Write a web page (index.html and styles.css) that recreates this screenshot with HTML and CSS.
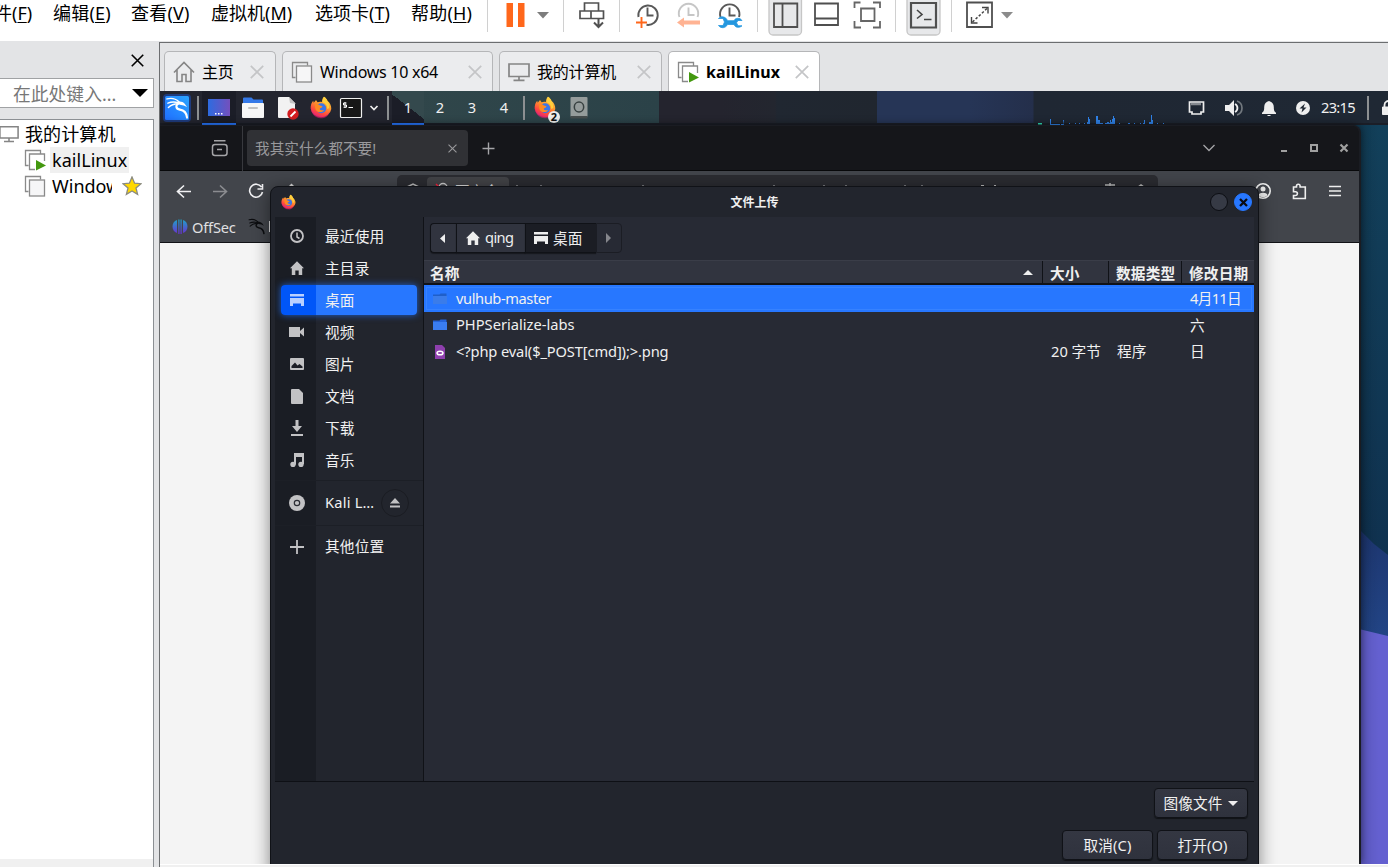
FILE: index.html
```html
<!DOCTYPE html>
<html lang="zh-CN">
<head>
<meta charset="utf-8">
<title>kailLinux</title>
<link rel="stylesheet" href="styles.css">
</head>
<body>
<svg class="defs" width="0" height="0" aria-hidden="true">
  <defs>
    <linearGradient id="fxg" x1="0.8" y1="0" x2="0.3" y2="1"><stop offset="0" stop-color="#ffe04a"/><stop offset=".4" stop-color="#ff9a2e"/><stop offset=".75" stop-color="#ff4a3d"/><stop offset="1" stop-color="#e0217c"/></linearGradient>
    <linearGradient id="kg" x1="0" y1="1" x2="1" y2="0"><stop offset="0" stop-color="#2070ff"/><stop offset="1" stop-color="#2aa4ff"/></linearGradient>
    <linearGradient id="dg" x1="0" y1="0" x2="1" y2="0"><stop offset="0" stop-color="#2d6be0"/><stop offset="1" stop-color="#7450bd"/></linearGradient>
    <linearGradient id="og" x1="0" y1="0" x2="0" y2="1"><stop offset="0" stop-color="#1ea2c8"/><stop offset="1" stop-color="#6a2fd0"/></linearGradient>
    <symbol id="fx" viewBox="0 0 22 22">
      <path d="M14 .3c2 1 3 2.600 3.600 4.300C19.600 6 21.500 9 21.300 12.500A10.400 9.700 0 0 1 .7 12.300C.4 8.500 1.600 6 3.200 4.300l.5 2L6 3.500l1.600 2.300C9 5 11 5 12 5.500 12 3.500 12.600 1.500 14 .3z" fill="url(#fxg)"/>
      <path d="M1 9c0 7 4.500 11 10 11 4 0 7-2 8.600-5-1.500 6-6 7.200-9 6.800C5 21.500 0 17 1 9z" fill="#e8206f" opacity=".55"/>
      <circle cx="11.200" cy="11.800" r="5" fill="#3b76e8"/>
      <path d="M5 7.500c2-.4 4 .2 5 1.600l2.500.6c-.2 1.500-2.300 1.500-2.800 2.500.3 1.600 2.600 2 4.400 1.200-1.500 3-7.300 3.100-8.600-.6C5 11 5 9 5 7.500z" fill="#ff8a22"/>
      <path d="M13 6c2.700.8 4.500 3 4.200 6.500l2-1C19.500 8 18 4 14 .3 12.800 2 12.400 4.500 13 6z" fill="#ffcf3c"/>
    </symbol>
    <symbol id="dragon" viewBox="0 0 24 24">
      <path d="M1.500 2.500c4-1 9-.5 12.500 3M2.500 7c3.500-1.500 7-1.500 11-.5M3 11.500C6 8.500 9 7.500 13 7.500" fill="none" stroke="currentColor" stroke-width="1.500" stroke-linecap="round"/>
      <path d="M13.500 7.500c-3.500 2-2.500 5.500 1.500 6.200 4.500.8 7 3.300 7.500 8.300" fill="none" stroke="currentColor" stroke-width="2.200" stroke-linecap="round"/>
      <path d="M12.500 5.500c3-.8 6 .2 7.500 2l2.500 3.500-3.500-1.700-4-.8-2-1z" fill="currentColor"/>
    </symbol>
    <symbol id="stack" viewBox="0 0 22 22">
      <path d="M4.500 16.500h-3v-15h15v3" fill="none" stroke="#8a8a8a" stroke-width="1.300"/><rect x="5.500" y="5" width="15" height="16" fill="#f6f6f7" stroke="#8a8a8a" stroke-width="1.300"/>
    </symbol>
    <symbol id="stackrun" viewBox="0 0 22 22">
      <path d="M4.500 16.500h-3v-15h15v3M11 20.500H5.500V5h15v7" fill="none" stroke="#8a8a8a" stroke-width="1.300"/><path d="M12 11l10 5.500-10 5z" fill="#43980f"/>
    </symbol>
    <symbol id="monitor" viewBox="0 0 22 20">
      <path d="M1 2h20v12.500H1zM11 15v3M5.500 18.300h11" fill="none" stroke="#858585" stroke-width="1.700"/>
    </symbol>
    <symbol id="home" viewBox="0 0 14 14"><path d="M7 .3L14 7.300h-1.800V14H8.700V9.500H5.300V14H1.800V7.300H0z" fill="currentColor"/></symbol>
    <symbol id="desk" viewBox="0 0 14 12"><path d="M0 0h14v2.500H0zM0 4h14v8h-3V9.500H3V12H0z" fill="currentColor"/></symbol>
    <symbol id="folder" viewBox="0 0 14 12"><path d="M0 1.500h6.500l1-1h6V11H0z" fill="#2462d8"/><path d="M0 3h14v8H0z" fill="#3a7df0"/></symbol>
    <symbol id="folderdim" viewBox="0 0 14 12"><path d="M0 1.500h6.500l1-1h6V11H0z" fill="#1f5fc9"/><path d="M0 3h14v8H0z" fill="#3a7cea"/></symbol>
    <symbol id="cross" viewBox="0 0 14 14"><path d="M.8.8l12.400 12.400M13.200.8L.8 13.200" fill="none" stroke="currentColor" stroke-width="1.700"/></symbol>
  </defs>
</svg>

<header class="menubar">
  <nav class="menus">
    <span class="m-file">件(<u>F</u>)</span><span class="m-edit">编辑(<u>E</u>)</span><span class="m-view">查看(<u>V</u>)</span><span class="m-vm">虚拟机(<u>M</u>)</span><span class="m-tabs">选项卡(<u>T</u>)</span><span class="m-help">帮助(<u>H</u>)</span>
  </nav>
  <i class="vsep"></i>
  <svg width="75" height="41" viewBox="488 0 75 41"><path d="M506.500 3h6.500v24h-6.500zM518 3h6.500v24H518z" fill="#ff671b"/><path d="M537 12h12l-6 6.500z" fill="#7d7d7d"/></svg>
  <i class="vsep"></i>
  <svg width="55" height="41" viewBox="564 0 55 41"><g fill="none" stroke="#515151" stroke-width="1.700"><path d="M584.500 11V3h14v8M580 11h11v7.500h-11zM591 11h12.500v7.500H591z"/><path d="M598.500 18v9M594 22.500l4.500 4.500 4.500-4.500" stroke-width="2"/></g></svg>
  <i class="vsep"></i>
  <svg width="137" height="41" viewBox="620 0 137 41"><g fill="none" stroke-width="1.900">
    <path d="M638.500 17a9.700 9.700 0 1 1 8 7.800M647.500 7.500v8h6" stroke="#585858"/><path d="M636 22.500h11M641.500 17v11" stroke="#ff671b"/>
    <path d="M679.500 17a9.700 9.700 0 1 1 18 0M688.500 7.500v7.500h6" stroke="#c6c6c6"/><path d="M720.500 17a9.700 9.700 0 1 1 18.500 0M729.500 7.500v8h6" stroke="#585858"/></g>
    <path d="M677 22.500l7-5v3h16v4h-16v3z" fill="#ffb393"/>
    <path d="M718.500 18.500h4.500l1.500 3.500-1.500 3.500h-4.500c2.500 3.500 7.500 2.500 9-1h6.500c1.500 3.500 5.500 3.500 8 1.300h-4l-1.500-3 1.500-2.300h4c-2-3-6.500-3-8 .2h-6.500c-1.500-4.200-6.500-5-9-2.200z" fill="#2497df" stroke="#2497df" stroke-width=".8"/></svg>
  <i class="vsep"></i>
  <svg width="137" height="41" viewBox="758 0 137 41"><path d="M769-4h32.500v35a4 4 0 0 1-4 4h-24.500a4 4 0 0 1-4-4z" fill="#e7e8ea" stroke="#c6c6c6" stroke-width="1.300"/><g fill="none" stroke="#4f4f4f" stroke-width="1.800"><path d="M774 3.500h23.300v23.500H774zM782.500 4v23M815 3.500h23v21.500h-23zM815 18.500h23"/><path d="M854.500 8V2.500h6M873 2.500h7V8M880 21v6.500h-7M861 27.500h-6.500V21M861 8.500h13.500V21H861z" stroke="#666"/></g></svg>
  <i class="vsep"></i>
  <svg width="55" height="41" viewBox="896 0 55 41"><path d="M907-4h33v35a4 4 0 0 1-4 4h-25a4 4 0 0 1-4-4z" fill="#e7e8ea" stroke="#c6c6c6" stroke-width="1.300"/><path d="M911 3h25v24.500h-25z" fill="none" stroke="#4f4f4f" stroke-width="2.200"/><path d="M917 10l5 4.500-5 4M924 19.500h7.500" fill="none" stroke="#444" stroke-width="1.600"/></svg>
  <i class="vsep"></i>
  <svg width="75" height="41" viewBox="952 0 75 41"><path d="M967 2.500h25v24.500h-25z" fill="none" stroke="#4f4f4f" stroke-width="1.800"/><path d="M982 7.500h6v6M971.500 17v6h6" fill="none" stroke="#444" stroke-width="1.400"/><path d="M972.500 22l15-14" stroke="#444" stroke-width="1.500" stroke-dasharray="2.500 1.800"/><path d="M1001 12h12l-6 6.500z" fill="#8b8b8b"/></svg>
</header>

<div class="main">
  <aside class="library">
    <div class="lib-head"><svg width="13" height="13"><use href="#cross"/></svg></div>
    <div class="lib-search"><span>在此处键入...</span><svg width="16" height="8" viewBox="0 0 16 8"><path d="M0 0h16L8 8z"/></svg></div>
    <div class="tree">
      <div class="node root"><svg width="20" height="20"><use href="#monitor"/></svg><span>我的计算机</span></div>
      <div class="node"><svg width="22" height="22"><use href="#stackrun"/></svg><span class="picked">kailLinux</span></div>
      <div class="node"><svg width="22" height="22"><use href="#stack"/></svg><span class="cut">Window</span><svg class="star" width="20" height="20" viewBox="0 0 20 20"><path d="M10 1l2.600 6.200 6.400.5-5 4.200 1.600 6.500L10 15l-5.600 3.400L6 11.900 1 7.700l6.400-.5z" fill="#ffd800" stroke="#8b8b80" stroke-width="1.300"/></svg></div>
      <div class="tree-foot"></div>
    </div>
  </aside>

  <section class="workspace">
    <div class="tabs">
      <div class="tab t1"><svg width="22" height="22" viewBox="0 0 22 22"><path d="M1 11.500L11 1.500l10 10M4 9v11.500h5v-7h4v7h5V9" fill="none" stroke="#858585" stroke-width="1.600"/></svg><span>主页</span><svg class="x" width="14" height="14"><use href="#cross"/></svg></div>
      <div class="tab t2"><svg width="22" height="22"><use href="#stack"/></svg><span>Windows 10 x64</span><svg class="x" width="14" height="14"><use href="#cross"/></svg></div>
      <div class="tab t3"><svg width="22" height="20"><use href="#monitor"/></svg><span>我的计算机</span><svg class="x" width="14" height="14"><use href="#cross"/></svg></div>
      <div class="tab t4"><svg width="22" height="22"><use href="#stackrun"/></svg><span>kailLinux</span><svg class="x" width="14" height="14"><use href="#cross"/></svg></div>
    </div>

    <div class="guest">
      <svg class="wallpaper" width="27" height="739" viewBox="1361 125 27 739" preserveAspectRatio="none">
        <defs><linearGradient id="w1" x1="0" y1="0" x2="0" y2="1"><stop offset="0" stop-color="#12405a"/><stop offset="1" stop-color="#0f314f"/></linearGradient><linearGradient id="w2" x1="0" y1="0" x2="0" y2="1"><stop offset="0" stop-color="#1d3670"/><stop offset="1" stop-color="#224586"/></linearGradient><linearGradient id="w3" x1="0" y1="0" x2="1" y2="0"><stop offset="0" stop-color="#000" stop-opacity=".1"/><stop offset="1" stop-color="#000" stop-opacity="0"/></linearGradient></defs>
        <path d="M1361 125h27v440h-27z" fill="url(#w1)"/><path d="M1361 531l13 13 14 11v85h-27z" fill="url(#w2)"/><path d="M1361 629.500l27 6.500v228h-27z" fill="#6460d0"/><path d="M1361 125h18v739h-18z" fill="url(#w3)"/>
      </svg>

      <div class="panel">
        <svg width="36" height="34" viewBox="160 91 36 34"><rect x="163" y="94" width="28" height="28" rx="4" fill="#1d50c0" opacity=".55"/><rect x="165" y="96" width="24" height="24" rx="1.500" fill="url(#kg)"/><svg x="165.500" y="96" width="23" height="24" color="#fff"><use href="#dragon"/></svg></svg>
        <i class="psep"></i>
        <svg class="on" width="34" height="34" viewBox="202 91 34 34"><path d="M208 99h22v17h-22z" fill="url(#dg)"/><path d="M215 113h1.500v1.500H215zM218 113h1.500v1.500H218zM221 113h1.500v1.500H221z" fill="#fff"/></svg>
        <svg width="34" height="34" viewBox="236 91 34 34"><path d="M243 98.500a1 1 0 0 1 1-1h7.500l2 2H262a1 1 0 0 1 1 1v4h-20z" fill="#3579e8"/><rect x="242" y="103" width="22" height="15" rx="1" fill="#f7f7f7"/><rect x="248" y="107" width="10" height="2" rx="1" fill="#c2c2c2"/></svg>
        <svg width="34" height="34" viewBox="270 91 34 34"><path d="M278 98a1 1 0 0 1 1-1h10l6 6v15h-16a1 1 0 0 1-1-1z" fill="#f2f2f2"/><path d="M289 97l7 7-6-1z" fill="#c4c4c4"/><circle cx="293" cy="114" r="5.700" fill="#d31d20"/><path d="M290.500 116.500l5-5" stroke="#fff" stroke-width="1.800"/></svg>
        <svg width="34" height="34" viewBox="304 91 34 34"><svg x="310" y="96" width="22" height="23"><use href="#fx"/></svg></svg>
        <svg width="48" height="34" viewBox="338 91 48 34"><rect x="340.500" y="98.500" width="21" height="19" rx="1" fill="#171717" stroke="#f0f0f0" stroke-width="1.200"/><path d="M346.500 103h-3v2h3v2.200h-3M345 102v6M348.500 107.500h4.500" fill="none" stroke="#fff" stroke-width="1"/><path d="M370.500 106l3.500 3.500 3.500-3.500" fill="none" stroke="#eee" stroke-width="1.700"/></svg>
        <i class="psep"></i>
        <span class="ws on">1</span><span class="ws">2</span><span class="ws">3</span><span class="ws">4</span>
        <i class="psep p3"></i>
        <svg width="72" height="34" viewBox="528 91 72 34"><svg x="534" y="96" width="22" height="23"><use href="#fx"/></svg><circle cx="554" cy="117" r="6" fill="#eeeeec"/><text x="554" y="121" class="badge">2</text><rect x="570.500" y="97" width="17" height="20" rx="1" fill="#959c9b"/><path d="M570.500 116h17v2.500h-17z" fill="#454c4c"/><ellipse cx="579" cy="107" rx="4.700" ry="5" fill="none" stroke="#384141" stroke-width="1.500"/></svg>
        <svg class="graph" width="130" height="34" viewBox="1036 91 130 34"><path d="M1038 123h4v1.500h-4z" fill="#2fe0b8"/><path d="M1050 119h1v5h9v1h-10zM1063 120h1v4h-3v1h3zM1069 123h1v1h-1zM1075 123h1v1h-1zM1079 123h1v1h-1zM1084 123h1v1h-1zM1087 124v-2h1v-5h1v2h1v5zM1096 124v-8h2v4h2v3h3v1zM1105 124v-1h2v-1h2v1h1v-3h1v2h1v-3h1v-3h1v2h1v6zM1119 123h1v1h-1zM1128 123h2v1h-2zM1134 123h1v1h-1zM1140 123h1v1h-1zM1143 123h1v-3h1v4h-2zM1149 124v-2h2v-7h1v5h1v4zM1157 123h1v1h-1zM1163 123h1v1h-1z" fill="#2f83ea"/></svg>
        <svg width="155" height="34" viewBox="1166 91 155 34"><path d="M1189.500 102h14v10h-2.500v2h-9v-2h-2.500z" fill="none" stroke="#eee" stroke-width="1.700"/><path d="M1191.500 104h10" stroke="#eee" stroke-width="2.500" stroke-dasharray="1 1"/><path d="M1225 105h4l5-5v16l-5-5h-4z" fill="#eee"/><path d="M1235 104a4.500 4.500 0 0 1 0 8" fill="none" stroke="#eee" stroke-width="1.800"/><path d="M1237 101a7.400 7.400 0 0 1 0 14" fill="none" stroke="#72787e" stroke-width="1.700"/><path d="M1262 114v-1.200c2-1 2.200-3 2.200-5.800 0-3.500 2-5 4.800-6 2.800 1 4.800 2.500 4.800 6 0 2.800.2 4.800 2.200 5.800v1.200zM1267.500 115h3v1h-3z" fill="#eee"/><circle cx="1303" cy="108" r="7" fill="#eee"/><path d="M1305 103.500l-5.500 5h3l-1 4 5-5h-3z" fill="#202832"/></svg>
        <span class="clock">23:15</span>
        <svg width="26" height="34" viewBox="1362 91 26 34"><path d="M1367 96h2v24h-2z" fill="#8d9092"/><path d="M1382.500 107h8v7.500h-8z" fill="#eee" stroke="#eee"/><path d="M1384.500 107v-2a4 4 0 0 1 6-3.500" fill="none" stroke="#eee" stroke-width="1.800"/></svg>
      </div>

      <div class="browser">
        <div class="bstrip">
          <svg width="82" height="45" viewBox="161 127 82 45"><g fill="none" stroke="#a5a5a8" stroke-width="1.500"><rect x="213" y="145.500" width="14.500" height="11" rx="2.500"/><path d="M214.500 141.700h11.500M217.500 150.500h5"/></g></svg>
          <div class="btab"><span>我其实什么都不要!</span><svg width="9" height="9"><use href="#cross"/></svg></div>
          <svg width="40" height="45" viewBox="469 126 40 45"><path d="M483.500 148.500h12M489.500 142.500v12" stroke="#a5a5a8" stroke-width="1.400"/></svg>
          <svg class="winbtns" width="160" height="45" viewBox="1199 126 160 45"><path d="M1203.500 145l5.500 5.500 5.500-5.500" fill="none" stroke="#a5a5a8" stroke-width="1.300"/><path d="M1281 150h6v2h-6z" fill="#a0a0a0"/><path d="M1311 145h6v6h-6z" fill="none" stroke="#a0a0a0" stroke-width="2"/><path d="M1340.500 144.500l7 7M1347.500 144.500l-7 7" stroke="#a0a0a0" stroke-width="2.200"/></svg>
        </div>
        <div class="btools">
          <svg width="237" height="40" viewBox="160 171 237 40"><g fill="none" stroke="#f1f1f3" stroke-width="1.600"><path d="M191 191.500h-13M184 185.500l-6.500 6 6.500 6"/><path d="M213 191.500h13M220 185.500l6.500 6-6.500 6" stroke="#8b8c90"/><path d="M261.500 187a6.500 6.500 0 1 0 1 5M262.500 184v5h-5"/><path d="M285 191l6.500-6.300 6.500 6.300" stroke="#ddd"/></g></svg>
          <div class="url"><svg width="30" height="20" viewBox="397 175 30 20"><path d="M407 187l6-3 6 3v5" fill="none" stroke="#bbb" stroke-width="1.500"/></svg><div class="unsafe"><svg width="28" height="20" viewBox="427 177 28 20"><path d="M439 190v-2.500a4 4 0 0 1 8 0v3" fill="none" stroke="#ccc" stroke-width="1.500"/><path d="M436 184l4 4" stroke="#ff1e3c" stroke-width="1.500"/></svg>不安全</div><svg width="648" height="20" viewBox="510 175 648 20"><path d="M517 186h40M643 186h14M774 186h8M824 186h2M846 186h2M905 186h2M922 186h7" stroke="#77787c" stroke-width="2" stroke-dasharray="2 22"/><path d="M982 185.700h3M995 185.700h2M1106 185h10M1111 183v3M1139 187l3-2 3 2" fill="none" stroke="#bbb" stroke-width="1.500"/></svg></div>
          <svg class="bright" width="110" height="40" viewBox="1249 171 110 40"><g fill="none" stroke="#eee" stroke-width="1.600"><circle cx="1263" cy="191" r="7.200"/><path d="M1293.500 187h3v-1a1.800 1.800 0 0 1 3.600 0v1h5.200v11.500h-11.800v-3h2a1.800 1.800 0 0 0 0-3.800h-2zM1329 186.500h12M1329 191h12M1329 195.500h12"/></g><circle cx="1263" cy="189" r="2.500" fill="#eee"/><path d="M1258.500 195c1-3 8-3 9 0-2 3-7 3-9 0z" fill="#eee"/></svg>
        </div>
        <div class="bmarks"><svg width="16" height="16" viewBox="0 0 16 16"><path d="M5 1v13C-1 12-1 3 5 1zM6.300.5h1.200V15H6.300zM8.500.5h1.200V15H8.500zM11 1v13c6-2 6-11 0-13z" fill="url(#og)"/></svg><span>OffSec</span><svg class="bk" width="17" height="17"><use href="#dragon"/></svg><i class="kedge"></i></div>
        <div class="bpage"></div>
      </div>

      <div class="dialog">
        <div class="dtitle"><svg width="15" height="16"><use href="#fx"/></svg><b>文件上传</b><i class="dmin"></i><i class="dclose"><svg width="9" height="9" viewBox="0 0 9 9"><path d="M1 1l7 7M8 1L1 8" stroke="#0a0c12" stroke-width="2.300"/></svg></i></div>
        <div class="dbody">
          <div class="places">
            <div class="place"><svg width="14" height="14" viewBox="0 0 14 14"><circle cx="7" cy="7" r="6" fill="none" stroke="#c2c2c4" stroke-width="1.800"/><path d="M7 3.500V8l2.500 1.500" fill="none" stroke="#c2c2c4" stroke-width="1.500"/></svg><span>最近使用</span></div>
            <div class="place"><svg width="14" height="14"><use href="#home"/></svg><span>主目录</span></div>
            <div class="place sel"><svg width="14" height="12"><use href="#desk"/></svg><span>桌面</span></div>
            <div class="place"><svg width="16" height="12" viewBox="0 0 16 12"><path d="M0 1h11v10H0zM11 5l4-3.500v9L11 7z" fill="currentColor"/></svg><span>视频</span></div>
            <div class="place"><svg width="14" height="12" viewBox="0 0 14 12"><rect width="14" height="12" rx="1" fill="currentColor"/><path d="M1.500 10V8L5 4.500l2.500 3 2-1.500 3 2.500V10z" fill="#1c1e26"/></svg><span>图片</span></div>
            <div class="place"><svg width="12" height="15" viewBox="0 0 12 15"><path d="M1 0h7l4 4v10a1 1 0 0 1-1 1H1a1 1 0 0 1-1-1V1a1 1 0 0 1 1-1z" fill="currentColor"/></svg><span>文档</span></div>
            <div class="place"><svg width="12" height="16" viewBox="0 0 12 16"><path d="M4.500 0h3v6H11l-5 6-5-6h3.500zM0 14h12v2H0z" fill="currentColor"/></svg><span>下载</span></div>
            <div class="place"><svg width="14" height="14" viewBox="0 0 14 14"><path d="M4 0h10v11h-2V4H6v7.500H4z" fill="currentColor"/><circle cx="3" cy="11.500" r="2.700" fill="currentColor"/><circle cx="11" cy="11.500" r="2.700" fill="currentColor"/></svg><span>音乐</span></div>
            <div class="place kali"><svg width="16" height="16" viewBox="0 0 16 16"><circle cx="8" cy="8" r="8" fill="currentColor"/><circle cx="8" cy="8" r="2.700" fill="none" stroke="#2a2c33" stroke-width="1.200"/></svg><span>Kali L…</span><i class="eject"><svg width="10" height="10" viewBox="0 0 10 10"><path d="M5 0l5 5.500H0zM0 7.500h10v2H0z" fill="#c2c2c4"/></svg></i></div>
            <div class="place other"><svg width="14" height="14" viewBox="0 0 14 14"><path d="M0 7h14M7 0v14" stroke="currentColor" stroke-width="1.800"/></svg><span>其他位置</span></div>
          </div>
          <div class="files">
            <div class="pathbar">
              <span class="pb back"><svg width="5" height="9" viewBox="0 0 5 9"><path d="M5 0v9L0 4.500z" fill="#eee"/></svg></span><span class="pb user"><svg width="14" height="14"><use href="#home"/></svg><em>qing</em></span><span class="pb cur"><svg width="14" height="12"><use href="#desk"/></svg><em>桌面</em></span><span class="pb fwd"><svg width="5" height="10" viewBox="0 0 5 10"><path d="M0 0v10l5-5z" fill="#85868c"/></svg></span>
            </div>
            <div class="row head"><b>名称<svg width="10" height="5" viewBox="0 0 10 5"><path d="M0 5h10L5 0z" fill="#eee"/></svg></b><b>大小</b><b>数据类型</b><b>修改日期</b></div>
            <div class="row chosen"><span><svg width="14" height="12"><use href="#folderdim"/></svg><em class="n1">vulhub-master</em></span><span></span><span></span><span><em class="date">4月11日</em></span></div>
            <div class="row short"><span><svg width="14" height="12"><use href="#folder"/></svg><em>PHPSerialize-labs</em></span><span></span><span></span><span><em>六</em></span></div>
            <div class="row"><span><svg width="14" height="14" viewBox="0 0 14 14"><path d="M2 0h7l3 3v11H2z" fill="#8e3fae"/><ellipse cx="7" cy="8" rx="3" ry="1.800" fill="none" stroke="#fff" stroke-width="1.500"/></svg><em class="n3">&lt;?php eval($_POST[cmd]);&gt;.png</em></span><span><em>20 字节</em></span><span><em>程序</em></span><span><em>日</em></span></div>
          </div>
        </div>
        <div class="dfoot">
          <div class="btn filter"><em>图像文件</em><svg width="10" height="5" viewBox="0 0 10 5"><path d="M0 0h10L5 5z" fill="#eee"/></svg></div>
          <div class="acts"><div class="btn"><em>取消(C)</em></div><div class="btn"><em>打开(O)</em></div></div>
        </div>
      </div>
    </div>
    <div class="status"></div>
  </section>
</div>
</body>
</html>
```
FILE: styles.css
```css
* { box-sizing: border-box; }
body { margin: 0; width: 1388px; height: 867px; overflow: hidden; display: flex; flex-direction: column; background: #e3e4e6; font-family: "Noto Sans", "Noto Sans CJK SC", sans-serif; color: #000; }
svg { display: block; flex: none; }
.defs { position: absolute; }
i, em { font-style: normal; }

.menubar { height: 41px; flex: none; background: #fff; display: flex; overflow: hidden; }
.menus { display: flex; width: 487px; flex: none; height: 26px; line-height: 26px; font-size: 18px; white-space: nowrap; }
.menus span { flex: none; }
.menus u { text-underline-offset: 2px; text-decoration-thickness: 1px; }
.m-file { width: 59px; margin-left: -6px; }
.m-edit { width: 78px; }
.m-view { width: 80px; }
.m-vm { width: 104px; }
.m-tabs { width: 96px; }
.m-edit, .m-view, .m-help { letter-spacing: .2px; }
.vsep { width: 1px; height: 32px; background: #d0d0d0; flex: none; }

.main { flex: 1; display: flex; min-height: 0; }
.library { width: 159px; flex: none; display: flex; flex-direction: column; padding-right: 5px; }
.lib-head { height: 37px; display: flex; justify-content: flex-end; align-items: center; padding: 1px 10px 0 0; }
.lib-search { height: 30px; border: 1px solid #a0a2a4; border-left: 0; background: #fff; display: flex; align-items: center; justify-content: space-between; padding: 0 5px 0 13px; font-size: 17.8px; color: #777; margin-bottom: 11px; white-space: nowrap; }
.tree { flex: 1; background: #fff; border: solid #8c9094; border-width: 1px 1px 0 0; display: flex; flex-direction: column; padding-top: 1px; font-size: 18px; }
.node { height: 26px; display: flex; align-items: center; padding-left: 24px; line-height: 26px; white-space: nowrap; }
.node span { margin-left: 4px; padding: 0 2px; }
.root { padding-left: 0; }
.root svg { margin-left: -1px; }
.node.root span { margin-left: 4px; letter-spacing: .1px; }
.node .picked { background: #f0f0f0; letter-spacing: .05px; }
.node .cut { width: 62px; overflow: hidden; padding-right: 0; }
.star { margin-left: 10px; }
.tree-foot { margin-top: auto; height: 8px; background: #f0f0f0; }

.workspace { flex: 1; margin-top: 1px; border: solid #6c6e70; border-width: 1px 0 0 1px; display: flex; flex-direction: column; min-width: 0; }
.tabs { height: 48px; flex: none; display: flex; align-items: flex-end; padding-left: 4px; gap: 6px; }
.tab { height: 40px; border: 1px solid #b5b6b8; border-bottom: 0; border-radius: 5px 5px 0 0; background: #ebecee; display: flex; align-items: center; padding-left: 8px; font-size: 16px; white-space: nowrap; }
.tab span { margin-left: 7px; }
.t1 span, .t3 span { position: relative; top: -1px; letter-spacing: -.2px; }
.t2 span { letter-spacing: -.27px; }
.tab .x { margin-left: auto; color: #c4c5c7; }
.t1 { width: 112px; padding-right: 11px; }
.t2 { width: 211px; padding-right: 10px; }
.t3 { width: 163px; padding-right: 10px; }
.t4 { width: 152px; padding-right: 10px; background: #fff; font-weight: bold; }
.t4 span { letter-spacing: .15px; }

.guest { height: 773px; flex: none; position: relative; overflow: hidden; background: #12384f; font-size: 14.67px; color: #f0f0f0; }
.wallpaper { position: absolute; right: 0; top: 34px; }
.panel { height: 34px; display: flex; background: linear-gradient(#0000 32px, #1b1e27 32px), linear-gradient(90deg, #23252f 0 245px, #30464a 245px 250px, #2b4248 499px, #24242e 499px 560px, #23262f 615px, #202731 617px, #20262f 717px, #263556 717px 810px, #242f4b 873px, #1f2733 874px, #1f2834); }
.panel .on { background: #1b1d27; box-shadow: inset 0 -2px #2777ff; height: 34px; flex: none; }
.psep { width: 2px; height: 24px; background: #8d9092; margin: 5px 3px 0 1px; flex: none; }
.p3 { margin: 5px 3px 0; }
.ws { width: 32px; flex: none; text-align: center; line-height: 33px; height: 33px; }
.panel .ws.on { background: conic-gradient(from -60deg at 12% 18%, #34494d 0 188deg, #1b1d27 188deg); }
.badge { font: bold 11px "Noto Sans", sans-serif; text-anchor: middle; fill: #111; }
.graph { margin-left: auto; }
.clock { width: 41px; line-height: 33px; flex: none; letter-spacing: -.7px; }

.browser { position: absolute; left: 0; top: 34px; width: 1201px; height: 739px; border: 1px solid #1a1c22; border-width: 1px 2px 0 0; border-radius: 0 8px 0 0; display: flex; flex-direction: column; overflow: hidden; background: #15161a; box-shadow: 0 0 8px #0008; }
.bstrip { height: 45px; flex: none; display: flex; border-bottom: 1px solid #08090b; }
.bstrip > svg:first-child { width: 83px; box-shadow: inset -1px 0 #38393e; }
.btab { width: 221px; height: 36px; margin: 4px 0 0 4px; background: #303135; border-radius: 4px; display: flex; align-items: center; justify-content: space-between; padding: 0 11px 0 8px; color: #99999c; flex: none; }
.btab span { margin-top: -1px; }
.winbtns { margin-left: auto; }
.btools { height: 40px; flex: none; display: flex; background: #42454b; }
.url { width: 761px; height: 32px; margin-top: 4px; background: #2b2c31; border-radius: 5px; display: flex; overflow: hidden; }
.unsafe { width: 82px; height: 28px; margin-top: 2px; background: #424347; border-radius: 4px; display: flex; white-space: nowrap; line-height: 28px; color: #ddd; }
.bright { margin-left: auto; }
.bmarks { height: 32px; flex: none; background: #42454b; border-bottom: 1px solid #111216; display: flex; align-items: center; padding-left: 12px; color: #e0e0e2; }
.bmarks span { margin-left: 4px; letter-spacing: -.2px; }
.bk { color: #0c0d10; margin-left: 12px; }
.kedge { width: 1px; height: 11px; margin-left: 4px; background: #e0e0e2; }
.bpage { flex: 1; background: #f4f4f4; }

.dialog { position: absolute; left: 110px; top: 95px; width: 989px; height: 690px; border: 1px solid #101217; border-radius: 8px 8px 0 0; background: #22252d; display: flex; flex-direction: column; box-shadow: 0 3px 17px #0007; padding: 0 4px; }
.dtitle { height: 30px; flex: none; display: flex; align-items: center; padding: 0 2px 0 6px; font-size: 12px; }
.dtitle b { flex: 1; text-align: center; padding-left: 3px; margin-top: -1px; }
.dmin, .dclose { width: 18px; height: 18px; border-radius: 50%; border: 1px solid #0c0e13; background: #363a45; display: flex; align-items: center; justify-content: center; }
.dclose { background: #2777ff; border-color: #2777ff; margin-left: 6px; }
.dbody { display: flex; height: 565px; flex: none; border-bottom: 1px solid #0e1015; }
.places { width: 149px; flex: none; padding-top: 3px; border-right: 1px solid #101217; background: linear-gradient(90deg, #1a1d24 41px, #22252d 41px); color: #c2c2c4; }
.place { height: 32px; display: grid; grid-template-columns: 44px 56px 30px; align-items: center; white-space: nowrap; }
.place > svg { justify-self: center; }
.place span { padding: 0 0 2px 6px; color: #f1f1f1; letter-spacing: .2px; }
.sel { height: 30px; margin: 1px 6px 1px 6px; grid-template-columns: 32px 1fr; border-radius: 4px; background: linear-gradient(90deg, #0056f8 35px, #2777ff 35px); box-shadow: 0 0 7px #2160d0; }
.sel > svg { color: #b9d0ff; }
.sel span { padding-left: 12px; }
.kali { margin-top: 4px; height: 45px; border-top: 1px solid #1c1f26; }
.other { border-top: 1px solid #1c1f26; height: 42px; }
.eject { width: 28px; height: 28px; border: 1px solid #1a1c22; border-radius: 50%; display: flex; align-items: center; justify-content: center; margin-left: 6px; }
.files { flex: 1; background: #272a34; }
.pathbar { height: 43px; padding: 6px 0 0 6px; display: flex; }
.pb { height: 30px; border: 1px solid #101217; border-right-width: 0; background: #31343f; display: flex; align-items: center; justify-content: flex-start; gap: 5px; box-shadow: 0 1px 1px #0006; color: #eee; white-space: nowrap; }
.pb em { padding-bottom: 2px; }
.back { width: 26px; border-radius: 4px 0 0 4px; padding-left: 9px; }
.user { width: 69px; padding-left: 9px; }
.user em { letter-spacing: -.6px; }
.cur { width: 71px; background: #1b1d24; padding-left: 8px; }
.fwd { width: 26px; background: #272a34; border: 1px solid #1b1d24; border-radius: 0 4px 4px 0; box-shadow: none; padding-left: 9px; }
.row { height: 27px; display: grid; grid-template-columns: 619px 66px 73px 72px; align-items: center; white-space: nowrap; }
.row > span { display: flex; align-items: center; gap: 9px; padding-left: 8px; }
.row > span:first-child { padding-left: 9px; }
.row em { padding-bottom: 2px; }
.short { height: 26px; }
.n1 { letter-spacing: -.42px; }
.n3 { letter-spacing: -.12px; }
.date { letter-spacing: -.7px; }
.head { height: 25px; background: #31343f; border-top: 1px solid #3a3d48; border-bottom: 2px solid #101217; }
.head b { height: 22px; border-right: 1px solid #101217; padding-left: 7px; display: flex; align-items: center; justify-content: space-between; letter-spacing: .2px; }
.head b:first-child { padding: 0 9px 0 6px; }
.head b:last-child { border: 0; }
.chosen { background: #2777ff; box-shadow: inset 0 0 0 2px #2777ff, inset 0 0 0 3px #3682ff; }
.dfoot { padding: 6px 6px 0 0; display: flex; flex-direction: column; align-items: flex-end; gap: 12px; }
.btn { width: 91px; height: 30px; border: 1px solid #101217; border-radius: 4px; background: linear-gradient(#343742, #2f323d); box-shadow: 0 1px 1px #0008; display: flex; align-items: center; justify-content: center; white-space: nowrap; }
.btn em { padding-bottom: 2px; letter-spacing: .1px; }
.filter { width: 94px; gap: 5px; padding-right: 1px; }
.acts { display: flex; gap: 4px; }
.status { height: 3px; background: #f0f0f0; border-top: 1px solid #fff; }
```
